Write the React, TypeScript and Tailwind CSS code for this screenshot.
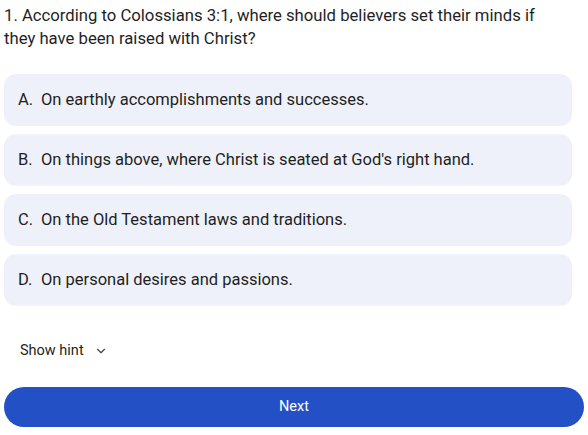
import React from 'react';
import { ChevronDown } from 'lucide-react';

const options = [
  { letter: 'A', text: 'On earthly accomplishments and successes.' },
  { letter: 'B', text: "On things above, where Christ is seated at God's right hand." },
  { letter: 'C', text: 'On the Old Testament laws and traditions.' },
  { letter: 'D', text: 'On personal desires and passions.' },
];

const App: React.FC = () => {
  return (
    <div className="w-[588px] bg-white text-[#1f1f1f] font-['Roboto',sans-serif] pl-1 pt-[4px]">
      <p className="w-[556px] text-[16.7px] leading-[23px]">
        1. According to Colossians 3:1, where should believers set their minds if they have been raised with Christ?
      </p>

      <div className="mt-[24px] flex flex-col gap-[8px] w-[568px]">
        {options.map((o) => (
          <button
            key={o.letter}
            className="h-[52px] rounded-[12px] bg-[#eef1f9] flex items-center pl-[14px] text-left text-[16.5px]"
          >
            <span className="w-[23px]">{o.letter}.</span>
            <span>{o.text}</span>
          </button>
        ))}
      </div>

      <div className="mt-[33px] flex items-center pl-4 h-[24px] text-[14.5px]">
        <span>Show hint</span>
        <ChevronDown className="ml-[10px] h-[14px] w-[14px] text-[#444]" strokeWidth={2} />
      </div>

      <button className="mt-[24px] w-[580px] h-[40px] rounded-full bg-[#2350c5] text-white text-[14.5px] font-normal">
        Next
      </button>
    </div>
  );
};

export default App;
